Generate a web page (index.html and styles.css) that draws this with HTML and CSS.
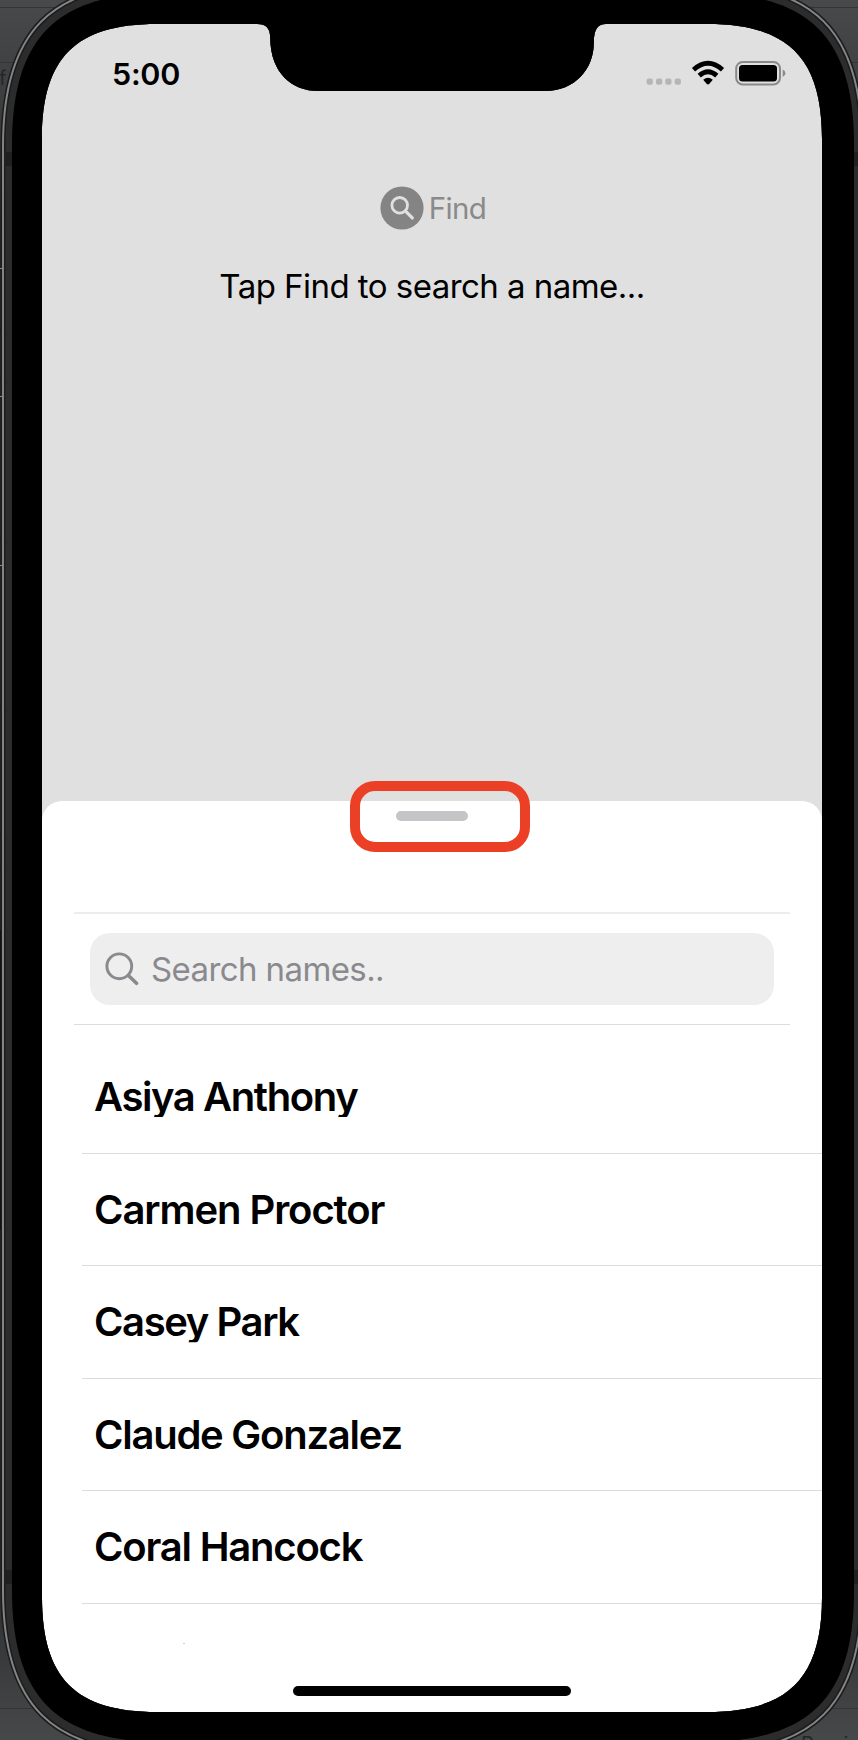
FILE: index.html
```html
<!DOCTYPE html>
<html lang="en">
<head>
<meta charset="utf-8">
<title>Find names</title>
<link rel="stylesheet" href="styles.css">
</head>
<body>
<div class="stage">
  <main class="screen">
    <header class="status">
      <span class="time">5:00</span>
      <svg class="status-icons" width="142" height="30" viewBox="644 58 142 30" aria-hidden="true">
        <g fill="#b5b5b5"><rect x="646.6" y="78.6" width="6.2" height="6.2" rx="2"/><rect x="656" y="78.6" width="6.2" height="6.2" rx="2"/><rect x="665.3" y="78.6" width="6.2" height="6.2" rx="2"/><rect x="674.7" y="78.6" width="6.2" height="6.2" rx="2"/></g>
        <g fill="none" stroke="#000" stroke-width="4.8"><path d="M693.5 69.7Q708 56.8 722.5 69.7"/><path d="M699.2 75.6Q708 67.9 716.8 75.6"/></g>
        <path d="M703.2 79.7Q708 75.9 712.8 79.7L709.4 83.7Q708 85.2 706.6 83.7Z"/>
        <rect x="736.2" y="62" width="43.8" height="22.4" rx="6.5" fill="none" stroke="#8a8a8a" stroke-width="2"/>
        <rect x="739" y="65" width="38" height="16.4" rx="3.5"/>
        <path d="M782.7 69.5Q785.4 70.7 785.4 73.2T782.7 77Z" fill="#8a8a8a"/>
      </svg>
    </header>
    <section class="intro">
      <div class="find">
        <svg width="44" height="44" viewBox="0 0 44 44" aria-hidden="true"><circle cx="22" cy="22" r="21.6" fill="#848484"/><g fill="none" stroke="#e0e0e0"><circle cx="19.7" cy="19.3" r="7.8" stroke-width="2.8"/><path d="M25.7 25.3L32.3 31.9" stroke-width="3.3" stroke-linecap="round"/></g></svg>
        <span class="find-label">Find</span>
      </div>
      <p class="hint">Tap Find to search a name...</p>
    </section>
    <section class="sheet">
      <div class="grab"><div class="handle"></div><div class="callout"></div></div>
      <div class="search-wrap">
        <div class="search">
          <svg width="34" height="34" viewBox="0 0 34 34" fill="none" stroke="#8a8a8e" stroke-linecap="round" aria-hidden="true"><circle cx="14.3" cy="14.3" r="12.4" stroke-width="2.9"/><path d="M23.7 23.7L31.5 31.3" stroke-width="3.6"/></svg>
          <span class="placeholder">Search names..</span>
        </div>
      </div>
      <ul class="names">
        <li><span class="name n1">Asiya Anthony</span></li>
        <li><span class="name n2">Carmen Proctor</span></li>
        <li><span class="name n3">Casey Park</span></li>
        <li><span class="name n4">Claude Gonzalez</span></li>
        <li><span class="name n5">Coral Hancock</span></li>
      </ul>
      <div class="speck"></div>
      <div class="home"></div>
    </section>
  </main>
  <svg class="bezel" width="858" height="1740" viewBox="0 0 858 1740" aria-hidden="true">
    <defs>
      <linearGradient id="wall" x1="0" y1="0" x2="0" y2="1"><stop offset="0" stop-color="#48494b"/><stop offset=".08" stop-color="#38393b"/><stop offset=".14" stop-color="#242527"/><stop offset=".88" stop-color="#242527"/><stop offset="1" stop-color="#47484a"/></linearGradient>
      <clipPath id="outside"><path clip-rule="evenodd" d="M0 0H858V1740H0ZM157 24H257C266 24 270.2 28 270.2 38C270.5 73 292 91 318 91H545C575 91 593.8 69 593.8 43C593.8 29 598 24 606 24H707C788.3 24 822 57.7 822 139V1597C822 1678.3 788.3 1712 707 1712H157C75.7 1712 42 1678.3 42 1597V139C42 57.7 75.7 24 157 24Z"/></clipPath>
    </defs>
    <g clip-path="url(#outside)">
      <rect width="858" height="1740" fill="url(#wall)"/>
      <path d="M0 7.5H858M0 62.5H858M0 1708.5H858" stroke="#333436"/>
      <path d="M0 328.5H2M0 377.5H2M0 537.5H2M0 705.5H2M0 832.5H2M0 868.5H2" stroke="#101113"/>
      <rect y="930" width="2" height="300" fill="#08090a"/>
      <text x="-1" y="85" class="backdrop-text">f</text>
      <text x="801" y="1751" class="backdrop-text">Preview</text>
      <path d="M166 -17H699C814 -17 862 31 862 146V1590C862 1705 814 1753 699 1753H166C51 1753 3 1705 3 1590V146C3 31 51 -17 166 -17Z" fill="#2c2c2c" stroke="#1b1c1d" stroke-width="5"/>
      <path d="M166 -17H699C814 -17 862 31 862 146V1590C862 1705 814 1753 699 1753H166C51 1753 3 1705 3 1590V146C3 31 51 -17 166 -17Z" fill="none" stroke="#848484" stroke-width="2"/>
      <path d="M0 268.5H2M0 396.5H2M0 565.5H2" stroke="#8a8a8a"/>
      <path d="M4 152H12V166H4ZM854 152H858V166H854ZM4 1570H12V1584H4ZM854 1570H858V1584H854Z" fill="#202020"/>
      <path d="M164 -7H702C809.5 -7 854 37.5 854 145V1590C854 1697.5 809.5 1742 702 1742H164C56.5 1742 12 1697.5 12 1590V145C12 37.5 56.5 -7 164 -7Z"/>
    </g>
  </svg>
</div>
</body>
</html>
```
FILE: styles.css
```css
* { box-sizing: border-box; }
body { margin: 0; background: #242527; font-family: Inter, "Liberation Sans", sans-serif; color: #000; }
.stage { position: relative; width: 858px; height: 1740px; overflow: hidden; padding: 24px 36px 28px 42px; }
.screen { display: flex; flex-direction: column; height: 1688px; background: #e0e0e0; }
.bezel { position: absolute; inset: 0; pointer-events: none; }
.backdrop-text { font: 20px Inter, sans-serif; fill: #252628; }
.status { display: flex; justify-content: space-between; align-items: center; height: 98px; padding: 0 36px 0 70px; }
.time { padding-top: 1px; font-size: 30.5px; font-weight: 600; line-height: 36px; letter-spacing: -0.3px; white-space: nowrap; }
.status-icons { display: block; }
.intro { display: flex; flex-direction: column; align-items: center; width: 780px; height: 679px; padding-top: 64px; }
.find { display: flex; align-items: center; gap: 5px; height: 44px; padding-left: 2px; }
.find-label { font-size: 29.5px; line-height: 44px; letter-spacing: -0.7px; color: #8a8a8a; }
.hint { margin: 34px 0 0; font-size: 33px; line-height: 44px; letter-spacing: -0.54px; white-space: nowrap; }
.sheet { position: relative; width: 780px; height: 911px; background: #fff; border-radius: 20px 20px 0 0; }
.grab { position: relative; height: 111px; padding: 10px 0 0 354px; }
.handle { width: 72px; height: 10px; border-radius: 5px; background: #c5c5c7; }
.callout { position: absolute; left: 308px; top: -20px; width: 180px; height: 71px; border: 10px solid #eb4026; border-radius: 25px; }
.search-wrap { height: 113px; margin: 0 32px; padding: 19px 16px 0; border-top: 2px solid #ededed; border-bottom: 1px solid #dcdcdd; }
.search { display: flex; align-items: center; gap: 12px; height: 72px; padding-left: 15px; border-radius: 20px; background: #eee; }
.placeholder { font-size: 33px; line-height: 44px; letter-spacing: -0.6px; color: #8a8a8e; white-space: nowrap; }
.names { list-style: none; margin: 0; padding: 16px 0 0 40px; }
.names li { height: 112.6px; padding: 36px 0 0 12px; border-bottom: 1px solid #dcdcdd; }
.name { display: block; height: 40px; font-size: 40px; font-weight: 600; line-height: 40px; white-space: nowrap; clip-path: inset(0); }
.n1 { letter-spacing: -1.4px; }
.n2 { letter-spacing: -1.07px; }
.n3 { letter-spacing: -1.4px; }
.n4 { letter-spacing: -1.25px; }
.n5 { letter-spacing: -1.2px; }
.speck { width: 2px; height: 1px; margin: 39px 0 0 141px; background: #ccc; }
.home { width: 278px; height: 10px; margin: 42px 0 0 251px; border-radius: 5px; background: #000; }
```
